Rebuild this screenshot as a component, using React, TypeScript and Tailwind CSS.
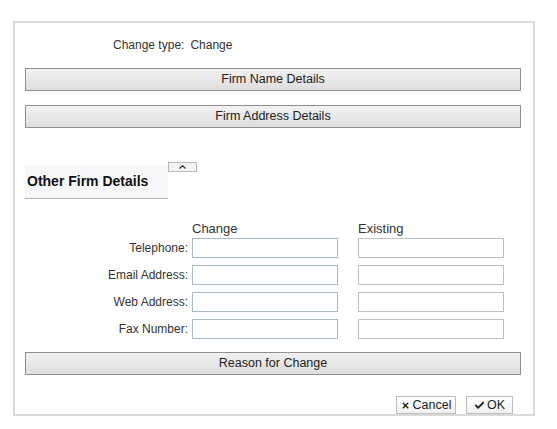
import { Check, X } from 'lucide-react';

const rows = ['Telephone:', 'Email Address:', 'Web Address:', 'Fax Number:'];

function SectionBar({ title }: { title: string }) {
  return (
    <div className="h-[23px] border border-[#8f8f8f] bg-gradient-to-b from-[#f2f2f2] to-[#dedede] flex items-center justify-center text-[12.5px] text-[#222]">
      {title}
    </div>
  );
}

export default function App() {
  return (
    <div className="w-[557px] h-[429px] bg-white pt-[21px] pl-[13px]" style={{ fontFamily: '"Liberation Sans", Arial, sans-serif' }}>
      <div className="w-[522px] h-[395px] border-2 border-[#dadada] pl-[10px] pr-[12px] flex flex-col">
        {/* Change type */}
        <div className="mt-[14px] h-[16px] flex items-center text-[12px] text-[#333] pl-[88px]">
          <span>Change type:</span>
          <span className="ml-[6px]">Change</span>
        </div>

        <div className="mt-[15px]">
          <SectionBar title="Firm Name Details" />
        </div>
        <div className="mt-[14px]">
          <SectionBar title="Firm Address Details" />
        </div>

        {/* Other Firm Details */}
        <div className="mt-[34px] flex items-start">
          <div className="mt-[3px] w-[143px] h-[34px] bg-[#f7f7f9] border-b border-[#b4b4b4] flex items-end pb-[6px] pl-[2px]">
            <span className="text-[14px] font-bold text-[#111]">Other Firm Details</span>
          </div>
          <button className="w-[29px] h-[10px] border border-[#b8b8b8] bg-[#f4f4f4] flex items-center justify-center">
            <svg width="7" height="4" viewBox="0 0 7 4" fill="none" stroke="#333" strokeWidth="1.2">
              <path d="M0.5 3.5 L3.5 0.7 L6.5 3.5" />
            </svg>
          </button>
        </div>

        {/* Field grid */}
        <div className="mt-[22px] flex flex-col">
          <div className="flex h-[17px] items-end text-[13px] text-[#333]">
            <div className="w-[167px]" />
            <div className="w-[166px]">Change</div>
            <div>Existing</div>
          </div>
          {rows.map((label, i) => (
            <div key={label} className={`flex items-center ${i === 0 ? 'mt-[0px]' : 'mt-[7px]'}`}>
              <div className="w-[163px] text-right text-[12px] text-[#333]">{label}</div>
              <input className="ml-[4px] w-[146px] h-[20px] border border-[#a9b9c6] bg-white outline-none" />
              <input className="ml-[20px] w-[146px] h-[20px] border border-[#b9c2ca] bg-white outline-none" />
            </div>
          ))}
        </div>

        <div className="mt-[13px]">
          <SectionBar title="Reason for Change" />
        </div>

        {/* Buttons */}
        <div className="mt-[21px] flex justify-end gap-[10px] pr-[8px]">
          <button className="h-[18px] w-[60px] border border-[#bdbdbd] bg-gradient-to-b from-white to-[#f0f0f0] flex items-center justify-center gap-[3px] text-[12.5px] text-[#222]">
            <X className="w-[9px] h-[9px]" strokeWidth={4} />
            Cancel
          </button>
          <button className="h-[18px] w-[47px] border border-[#bdbdbd] bg-gradient-to-b from-white to-[#f0f0f0] flex items-center justify-center gap-[2px] text-[12.5px] text-[#222]">
            <Check className="w-[11px] h-[11px]" strokeWidth={4} />
            OK
          </button>
        </div>
      </div>
    </div>
  );
}
